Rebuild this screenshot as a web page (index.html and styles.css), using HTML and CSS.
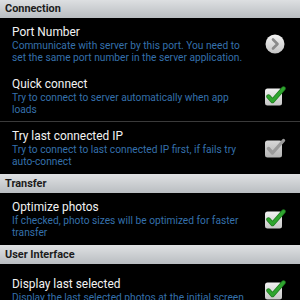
FILE: index.html
```html
<!DOCTYPE html>
<html>
<head>
<meta charset="utf-8">
<link rel="stylesheet" href="styles.css">
</head>
<body>
<div class="list">
  <div class="cat first">Connection</div>
  <div class="row">
    <div class="text">
      <div class="title">Port Number</div>
      <div class="summary">Communicate with server by this port. You need to set the same port number in the server application.</div>
    </div>
    <div class="widget">
      <svg class="arrow" width="20" height="20" viewBox="0 0 20 20">
        <defs>
          <linearGradient id="ag" x1="0" y1="0" x2="0" y2="1">
            <stop offset="0" stop-color="#f4f4f4"/>
            <stop offset="1" stop-color="#c4c4c4"/>
          </linearGradient>
        </defs>
        <circle cx="10" cy="10" r="9.5" fill="url(#ag)"/>
        <polyline points="8,5.5 12.5,10 8,14.5" fill="none" stroke="#8a8a8a" stroke-width="2.6" stroke-linecap="round" stroke-linejoin="round"/>
      </svg>
    </div>
  </div>
  <div class="row divided">
    <div class="text">
      <div class="title">Quick connect</div>
      <div class="summary">Try to connect to server automatically when app loads</div>
    </div>
    <div class="widget">
      <svg class="check" width="22" height="20" viewBox="0 0 22 20">
        <defs>
          <linearGradient id="cg" x1="0" y1="0" x2="0" y2="1">
            <stop offset="0" stop-color="#f2f2f2"/>
            <stop offset="1" stop-color="#c6c6c6"/>
          </linearGradient>
        </defs>
        <rect x="1" y="2.5" width="17" height="17" rx="2.5" fill="url(#cg)"/>
        <polyline points="4.5,10.5 8.5,15 19.5,2.5" fill="none" stroke="#1f7a1f" stroke-width="4.4" stroke-linecap="round" stroke-linejoin="round"/>
        <polyline points="4.5,10.5 8.5,15 19.5,2.5" fill="none" stroke="#2fa52f" stroke-width="3" stroke-linecap="round" stroke-linejoin="round"/>
      </svg>
    </div>
  </div>
  <div class="row">
    <div class="text">
      <div class="title">Try last connected IP</div>
      <div class="summary">Try to connect to last connected IP first, if fails try auto-connect</div>
    </div>
    <div class="widget">
      <svg class="check" width="22" height="20" viewBox="0 0 22 20">
        <defs>
          <linearGradient id="dg" x1="0" y1="0" x2="0" y2="1">
            <stop offset="0" stop-color="#d8d8d8"/>
            <stop offset="1" stop-color="#b4b4b4"/>
          </linearGradient>
        </defs>
        <rect x="1" y="2.5" width="17" height="17" rx="2.5" fill="url(#dg)"/>
        <polyline points="4.5,10.5 8.5,15 19.5,2.5" fill="none" stroke="#9a9a9a" stroke-width="3.4" stroke-linecap="round" stroke-linejoin="round"/>
      </svg>
    </div>
  </div>
  <div class="cat">Transfer</div>
  <div class="row">
    <div class="text">
      <div class="title">Optimize photos</div>
      <div class="summary">If checked, photo sizes will be optimized for faster transfer</div>
    </div>
    <div class="widget">
      <svg class="check" width="22" height="20" viewBox="0 0 22 20">
        <rect x="1" y="2.5" width="17" height="17" rx="2.5" fill="url(#cg)"/>
        <polyline points="4.5,10.5 8.5,15 19.5,2.5" fill="none" stroke="#1f7a1f" stroke-width="4.4" stroke-linecap="round" stroke-linejoin="round"/>
        <polyline points="4.5,10.5 8.5,15 19.5,2.5" fill="none" stroke="#2fa52f" stroke-width="3" stroke-linecap="round" stroke-linejoin="round"/>
      </svg>
    </div>
  </div>
  <div class="cat">User Interface</div>
  <div class="row">
    <div class="text">
      <div class="title">Display last selected</div>
      <div class="summary">Display the last selected photos at the initial screen</div>
    </div>
    <div class="widget">
      <svg class="check" width="22" height="20" viewBox="0 0 22 20">
        <rect x="1" y="2.5" width="17" height="17" rx="2.5" fill="url(#cg)"/>
        <polyline points="4.5,10.5 8.5,15 19.5,2.5" fill="none" stroke="#1f7a1f" stroke-width="4.4" stroke-linecap="round" stroke-linejoin="round"/>
        <polyline points="4.5,10.5 8.5,15 19.5,2.5" fill="none" stroke="#2fa52f" stroke-width="3" stroke-linecap="round" stroke-linejoin="round"/>
      </svg>
    </div>
  </div>
</div>
</body>
</html>
```

FILE: styles.css
```css
html, body {
  margin: 0;
  padding: 0;
  background: #000;
  height: 300px;
  overflow: hidden;
}
.list {
  width: 300px;
  font-family: Roboto, "Open Sans", sans-serif;
  margin-top: -1px;
}
.cat {
  height: 19px;
  line-height: 19px;
  padding-left: 5px;
  font-size: 10.9px;
  font-weight: bold;
  color: #1c1c1c;
  background: linear-gradient(#dfe1e3, #b9bdc1);
}
.row {
  display: flex;
  align-items: center;
  height: 52px;
  box-sizing: border-box;
  padding: 0 14px 0 12px;
}
.row.divided {
  border-bottom: 1px solid #3a3a3a;
}
.text {
  flex: 1;
  min-width: 0;
  padding-right: 14px;
}
.title {
  color: #f2f2f2;
  font-size: 11.9px;
  line-height: 16px;
}
.summary {
  color: #3570ac;
  font-size: 10.2px;
  line-height: 12px;
}
.widget {
  width: 22px;
  display: flex;
  justify-content: center;
}
.widget svg {
  display: block;
}
```
